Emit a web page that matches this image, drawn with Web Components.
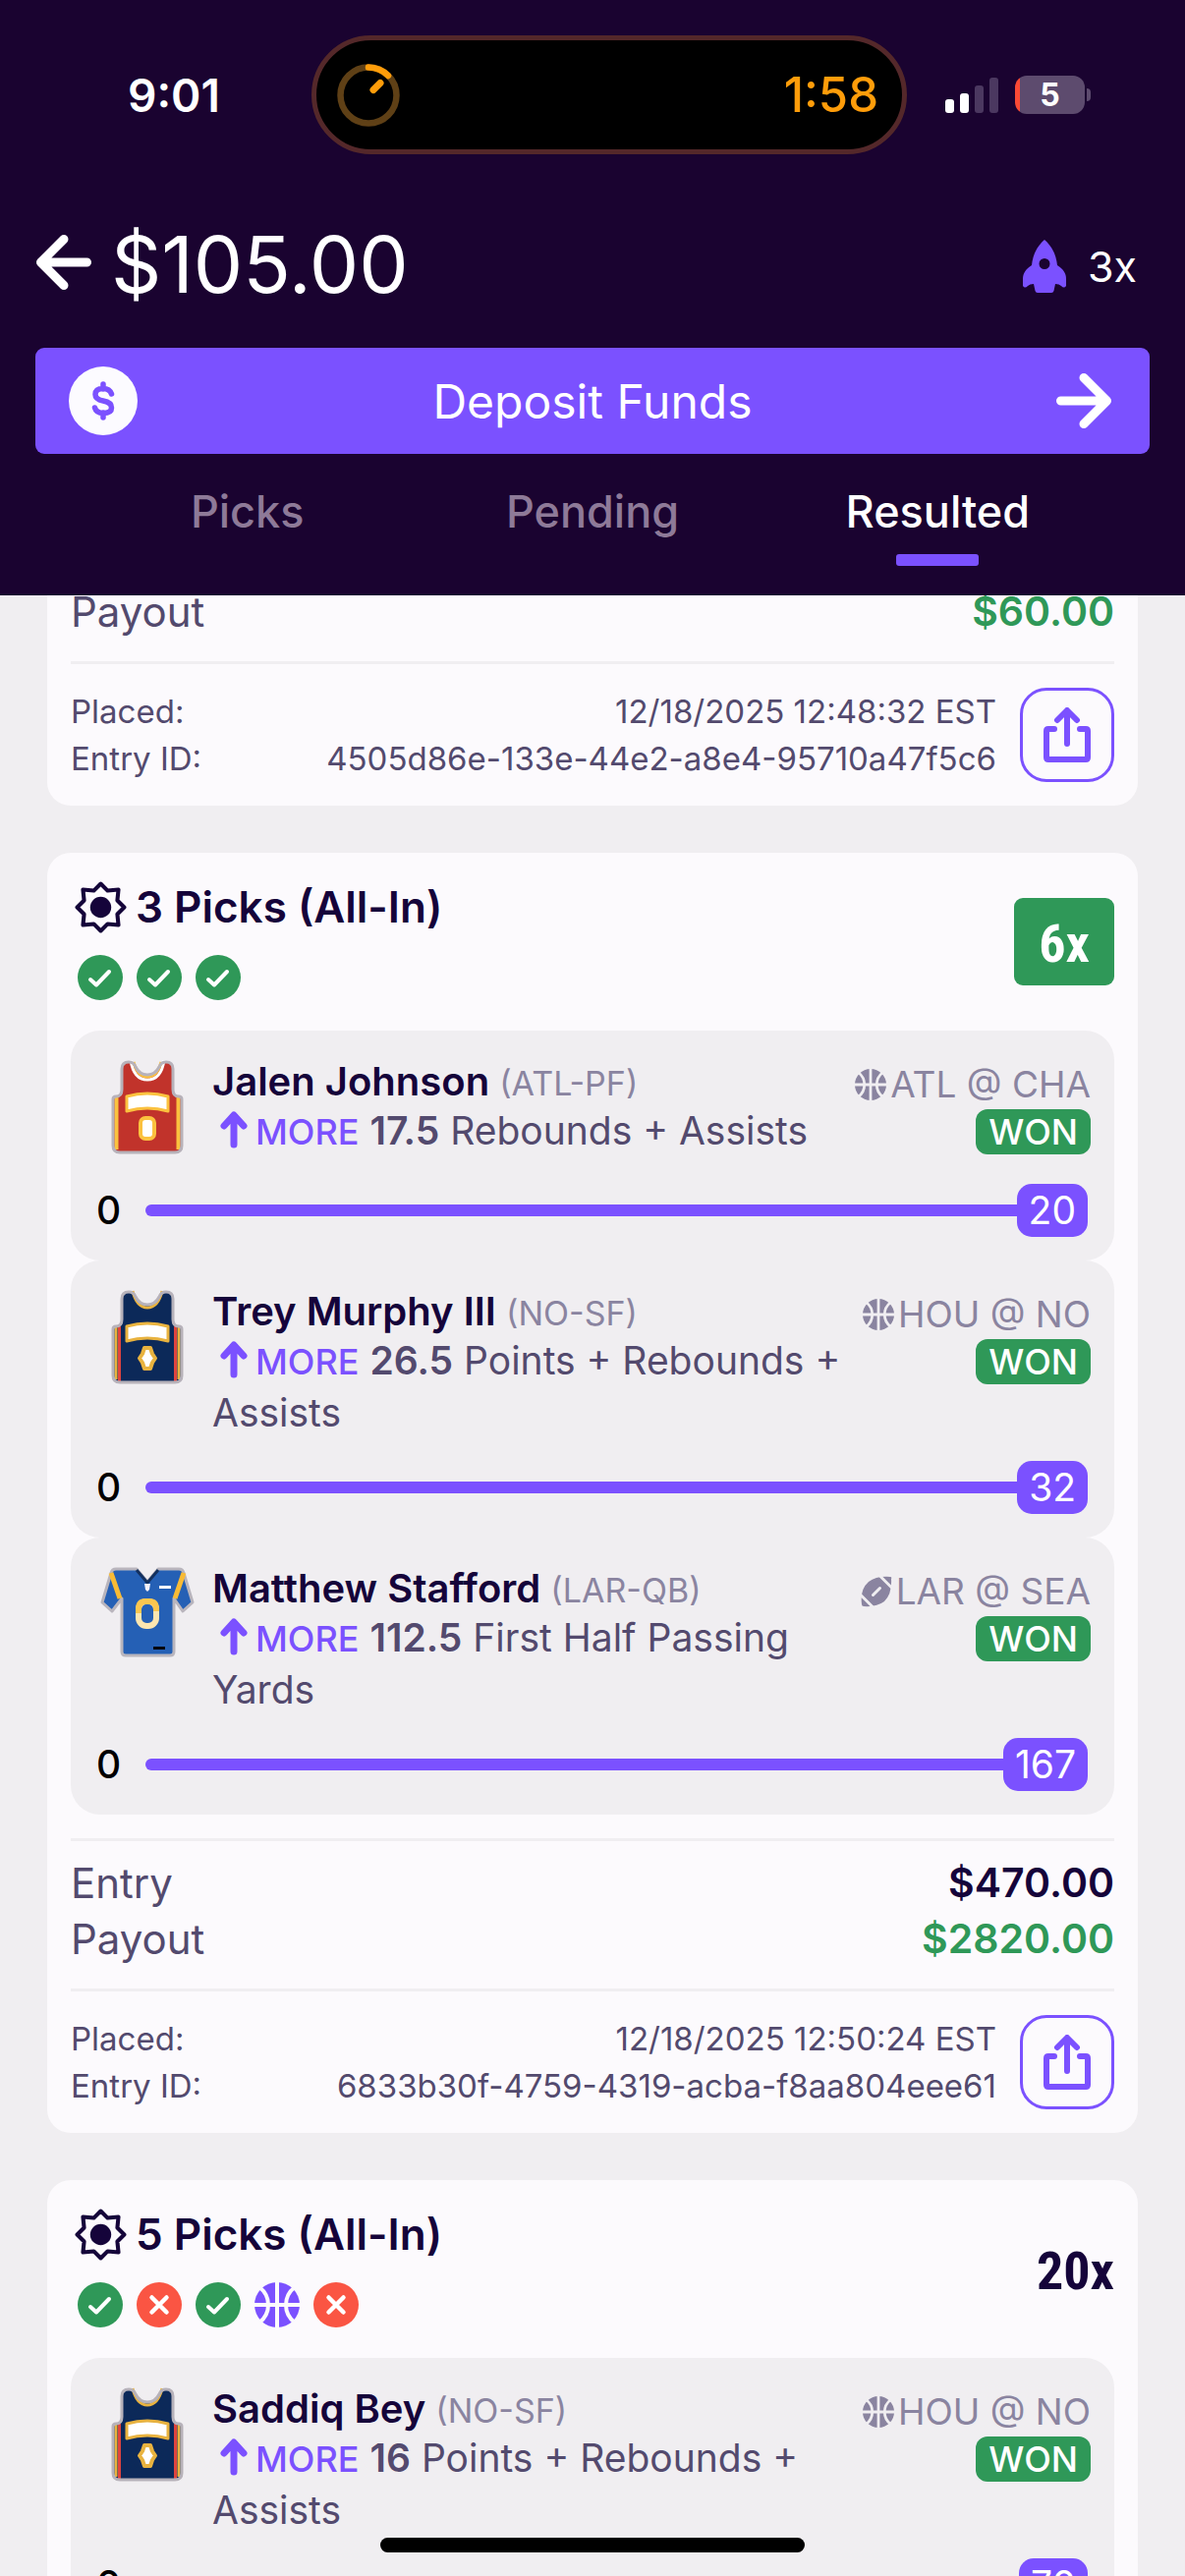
<!DOCTYPE html>
<html lang="en">
<head>
<meta charset="utf-8">
<meta name="viewport" content="width=device-width, initial-scale=1">
<title>Resulted entries</title>
<style>
  :root {
    --night: #1a0330;
    --ink: #15043a;
    --body: #534a6e;
    --muted: #8a84a0;
    --violet: #7b51ff;
    --green: #2f9858;
    --red: #fa5543;
    --card: #fcfafd;
    --page: #f0eef1;
  }
  body { margin: 0; background: var(--page); color: var(--ink); font-family: Inter, "Liberation Sans", sans-serif; }
</style>
</head>
<body>
<entries-app>
  <status-bar slot="top"></status-bar>
  <app-header slot="top" balance="$105.00" boost="3x"></app-header>

  <entry-card partial payout="$60.00" placed="12/18/2025 12:48:32 EST" entry-id="4505d86e-133e-44e2-a8e4-95710a47f5c6"></entry-card>

  <entry-card heading="3 Picks (All-In)" results="win win win" multiplier="6x" won
    entry="$470.00" payout="$2820.00" placed="12/18/2025 12:50:24 EST" entry-id="6833b30f-4759-4319-acba-f8aa804eee61">
    <pick-row jersey="hawks" player="Jalen Johnson" role-tag="(ATL-PF)" line="17.5" stat="Rebounds + Assists" sport="basketball" game="ATL @ CHA" score="20"></pick-row>
    <pick-row jersey="pelicans" player="Trey Murphy III" role-tag="(NO-SF)" line="26.5" stat="Points + Rebounds + Assists" sport="basketball" game="HOU @ NO" score="32"></pick-row>
    <pick-row jersey="rams" player="Matthew Stafford" role-tag="(LAR-QB)" line="112.5" stat="First Half Passing Yards" sport="football" game="LAR @ SEA" score="167"></pick-row>
  </entry-card>

  <entry-card heading="5 Picks (All-In)" results="win loss win basketball loss" multiplier="20x">
    <pick-row jersey="pelicans" player="Saddiq Bey" role-tag="(NO-SF)" line="16" stat="Points + Rebounds + Assists" sport="basketball" game="HOU @ NO" score="70"></pick-row>
  </entry-card>
</entries-app>

<script>
const tank = (base, trim, sides, number) => `<svg viewBox="0 0 96 96">
  <path d="M22 9Q22 2 29 2Q34 2 36 7Q40 15 48 15Q56 15 60 7Q62 2 67 2Q74 2 74 9V30Q74 37 80 37Q83 37 83 40V87Q83 94 76 94H20Q13 94 13 87V40Q13 37 16 37Q22 37 22 30Z" fill="${base}"/>
  ${sides}${trim}
  <path d="M22 9Q22 2 29 2Q34 2 36 7Q40 15 48 15Q56 15 60 7Q62 2 67 2Q74 2 74 9V30Q74 37 80 37Q83 37 83 40V87Q83 94 76 94H20Q13 94 13 87V40Q13 37 16 37Q22 37 22 30Z" fill="none" stroke="#b7b2ba" stroke-width="3"/>
  ${number}</svg>`;

const ICONS = {
  back: `<svg viewBox="0 0 58 58" fill="none" stroke="currentColor" stroke-width="9" stroke-linecap="round" stroke-linejoin="round"><path d="M29 5.5L5.5 29L29 52.5M6 29H52.5"/></svg>`,
  forward: `<svg viewBox="0 0 58 58" fill="none" stroke="currentColor" stroke-width="9" stroke-linecap="round" stroke-linejoin="round"><path d="M29 5.5L52.5 29L29 52.5M52 29H5.5"/></svg>`,
  rocket: `<svg viewBox="0 0 44 54" fill="currentColor"><path fill-rule="evenodd" d="M22 0C29 6 34 15 35 26C41 30 44 34 44 40V47Q42 50 39 47Q37 45 33 45L31.500 52Q31 54 29 54H15Q13 54 12.500 52L11 45Q7 45 5 47Q2 50 0 47V40C0 34 3 30 9 26C10 15 15 6 22 0ZM22 19A5.500 5.500 0 1 0 22 30A5.500 5.500 0 1 0 22 19Z"/></svg>`,
  coin: `<svg viewBox="0 0 70 70"><circle cx="35" cy="35" r="35" fill="#fcfbff"/><path d="M43.500 28Q41.500 22.500 35 22.500Q27 22.500 27 28.500Q27 33.500 35 35Q43.500 36.500 43.500 42Q43.500 47.500 35 47.500Q28 47.500 26.500 42M35 18V23M35 47V52" fill="none" stroke="#7b51ff" stroke-width="5.500" stroke-linecap="round"/></svg>`,
  share: `<svg viewBox="0 0 48 56" fill="none" stroke="currentColor" stroke-width="6" stroke-linecap="round" stroke-linejoin="round"><path d="M24 37V5M14 13L24 3L34 13M11 22H5Q3 22 3 24V51Q3 53 5 53H43Q45 53 45 51V24Q45 22 43 22H37"/></svg>`,
  star: `<svg viewBox="0 0 52 52"><path d="M26 2.500L32.900 9.400L43.700 8.300L42.600 19.100L49.500 26L42.600 32.900L43.700 43.700L32.900 42.600L26 49.500L19.100 42.600L8.300 43.700L9.400 32.900L2.500 26L9.400 19.100L8.300 8.300L19.100 9.400Z" fill="none" stroke="currentColor" stroke-width="4" stroke-linejoin="round"/><circle cx="26" cy="26" r="10.500" fill="currentColor"/></svg>`,
  win: `<svg viewBox="0 0 46 46"><circle cx="23" cy="23" r="23" fill="#2f9858"/><path d="M13 25L19 30.500L32 17" fill="none" stroke="#fff" stroke-width="4" stroke-linecap="round" stroke-linejoin="round"/></svg>`,
  loss: `<svg viewBox="0 0 46 46"><circle cx="23" cy="23" r="23" fill="#fa5543"/><path d="M15.500 15.500L30.500 30.500M30.500 15.500L15.500 30.500" fill="none" stroke="#fff" stroke-width="4.500" stroke-linecap="round"/></svg>`,
  basketball: `<svg viewBox="0 0 46 46"><mask id="m"><rect width="46" height="46" fill="#fff"/><path d="M23 0V46M0 23H46M5 5Q14 12 14 23Q14 34 5 41M41 5Q32 12 32 23Q32 34 41 41" fill="none" stroke="#000" stroke-width="4"/></mask><circle cx="23" cy="23" r="23" fill="currentColor" mask="url(#m)"/></svg>`,
  football: `<svg viewBox="0 0 32 32"><mask id="m"><rect width="32" height="32" fill="#fff"/><path d="M0 19.500L12.500 32M19.500 0L32 12.500" stroke="#000" stroke-width="2.800"/><path d="M12.500 19.500L19.500 12.500" stroke="#000" stroke-width="3" stroke-linecap="round"/></mask><path d="M1 29Q-1 14 8 6Q16 0 30 1Q32 1 31 3Q32 18 24 26Q16 32 3 31Q1 31 1 29Z" fill="currentColor" mask="url(#m)"/></svg>`,
  up: `<svg viewBox="0 0 28 38" fill="none" stroke="currentColor" stroke-width="7" stroke-linecap="round" stroke-linejoin="round"><path d="M14 34V5M4 15L14 4L24 15"/></svg>`,
  hawks: tank('#c1332b',
    `<path d="M31 0Q34 20 48 20Q62 20 65 0" fill="none" stroke="#fff" stroke-width="3"/><path d="M34 2Q38 17 48 17Q58 17 62 2" fill="none" stroke="#fbc23f" stroke-width="3"/>`,
    `<path d="M16.500 38V91M79.500 38V91" stroke="#fbc23f" stroke-width="4"/>`,
    `<path d="M27 37Q48 31 69 37V52Q48 46 27 52Z" fill="#fff" stroke="#fbc23f" stroke-width="3" stroke-linejoin="round"/><rect x="41" y="59" width="14" height="21" rx="5" fill="#fff" stroke="#fbc23f" stroke-width="4"/>`),
  pelicans: tank('#0c2959',
    `<path d="M33 1Q37 18 48 18Q59 18 63 1" fill="none" stroke="#e9b33f" stroke-width="3"/>`,
    `<path d="M16 38V91M80 38V91" stroke="#e9b33f" stroke-width="3"/><path d="M19.500 37V93M76.500 37V93" stroke="#e0443e" stroke-width="3"/>`,
    `<path d="M27 37Q48 31 69 37V52Q48 46 27 52Z" fill="#fff" stroke="#e9b33f" stroke-width="3" stroke-linejoin="round"/><path d="M45 59H51L53 65L56 69.500L53 74L51 80H45L43 74L40 69.500L43 65Z" fill="#fff" stroke="#e9b33f" stroke-width="4" stroke-linejoin="round"/>`),
  rams: `<svg viewBox="0 0 96 96"><path d="M11 6Q12 2 16 2H37L48 15L59 2H80Q84 2 85 6L94 36L84 45L75 32V86Q75 90 71 90H26Q22 90 22 86V32L12 45L2 36Z" fill="#2560b5" stroke="#b9b5bd" stroke-width="3" stroke-linejoin="round"/>
    <path d="M11 6L20 32M85 6L76 32" stroke="#f9bb35" stroke-width="5"/><path d="M37 3L48 16L59 3" fill="none" stroke="#12305f" stroke-width="3"/><path d="M45 17H51L50 23L48 25L46 23Z" fill="#f4f1f8"/><rect x="60" y="19" width="12" height="3" fill="#fff"/>
    <rect x="39" y="35" width="18" height="25" rx="8" fill="none" stroke="#fce6b0" stroke-width="6"/><path d="M39 47V43Q39 35 46 35H50Q57 35 57 43V45" fill="none" stroke="#fbc64f" stroke-width="6"/><rect x="54" y="81" width="12" height="3" fill="#06060c"/></svg>`
};

class Base extends HTMLElement {
  connectedCallback() {
    if (this.shadowRoot) return;
    this.attachShadow({ mode: 'open' }).innerHTML = this.view();
  }
  a(name) { return this.getAttribute(name) || ''; }
}

customElements.define('ui-icon', class extends Base {
  view() {
    return `<style>:host{display:block;flex:none}svg{display:block;width:100%;height:100%}</style>${ICONS[this.a('name')]}`;
  }
});

customElements.define('entries-app', class extends Base {
  view() {
    return `<style>
      :host { display: flex; flex-direction: column; height: 100vh; overflow: hidden; }
      header { background: var(--night); color: #fff; position: relative; z-index: 1; flex: none; }
      main { flex: 1; min-height: 0; padding: 0 48px; margin-top: -36px; display: flex; flex-direction: column; gap: 48px; overflow: hidden; }
      .home { position: fixed; left: 50%; bottom: 24px; width: 432px; height: 15px; margin-left: -216px; border-radius: 8px; background: #000; z-index: 2; }
    </style>
    <header><slot name="top"></slot></header>
    <main><slot></slot></main>
    <div class="home"></div>`;
  }
});

customElements.define('status-bar', class extends Base {
  view() {
    return `<style>
      :host { display: flex; align-items: center; justify-content: center; padding: 36px 96px 0; font-weight: 600; }
      .time { flex: 1; padding-left: 34px; font-size: 46px; line-height: 56px; }
      .island { display: flex; align-items: center; justify-content: space-between; box-sizing: border-box; width: 606px; height: 121px; padding: 0 24px 0 21px; border: 5px solid #54282a; border-radius: 61px; background: #000; color: #ff9d0a; font-size: 49px; font-weight: 500; }
      .island svg { width: 64px; height: 64px; }
      .right { flex: 1; display: flex; align-items: center; justify-content: flex-end; gap: 16px; }
      .signal { width: 55px; height: 36px; }
      .battery { display: flex; align-items: center; gap: 2px; }
      .cell { width: 71px; height: 39px; border-radius: 12px; background: linear-gradient(90deg, #fa4a35 5px, #5d4b6e 5px); font-size: 32px; line-height: 39px; font-weight: 700; text-align: center; }
      .nub { width: 4px; height: 13px; border-radius: 0 4px 4px 0; background: #5d4b6e; }
    </style>
    <div class="time">9:01</div>
    <div class="island">
      <svg viewBox="0 0 64 64" fill="none" stroke-width="6.500"><circle cx="32" cy="32" r="28.500" stroke="#5f4016"/><path d="M32 3.500A28.500 28.500 0 0 1 52 12" stroke="#ff9d0a" stroke-linecap="round"/><path d="M37 26.500L44 19.500" stroke="#ff9d0a" stroke-width="7" stroke-linecap="round"/></svg>
      <span>1:58</span>
    </div>
    <div class="right">
      <svg class="signal" viewBox="0 0 55 36"><rect y="22" width="9" height="14" rx="3" fill="#fff"/><rect x="15" y="16" width="9" height="20" rx="3" fill="#fff"/><rect x="30" y="8" width="9" height="28" rx="3" fill="#4b3860"/><rect x="45" width="9" height="36" rx="3" fill="#4b3860"/></svg>
      <div class="battery"><div class="cell">5</div><div class="nub"></div></div>
    </div>`;
  }
});

customElements.define('app-header', class extends Base {
  view() {
    return `<style>
      :host { display: block; padding: 62px 36px 0; }
      button { font: inherit; color: inherit; background: none; border: 0; padding: 0; margin: 0; }
      .top { display: flex; align-items: center; height: 96px; }
      .back ui-icon { width: 58px; height: 58px; }
      .balance { flex: 1; padding: 4px 0 0 19px; font-size: 80px; line-height: 92px; }
      .boost { display: flex; align-items: center; gap: 22px; padding: 8px 13px 0 0; font-size: 43px; line-height: 54px; }
      .boost ui-icon { width: 44px; height: 54px; color: var(--violet); }
      .deposit { display: flex; align-items: center; width: 100%; height: 108px; margin-top: 39px; padding: 0 38px 0 34px; border-radius: 9px; background: var(--violet); font-size: 48px; }
      .deposit ui-icon { width: 58px; height: 58px; margin-left: 8px; }
      .deposit .coin { width: 70px; height: 70px; margin: 0; }
      .deposit span { flex: 1; }
      nav { display: flex; padding: 30px 40px 30px; }
      nav button { flex: 1; display: flex; flex-direction: column; align-items: center; gap: 14px; font-size: 45px; line-height: 58px; font-weight: 500; color: #8e7a98; }
      nav button::after { content: ""; width: 84px; height: 12px; border-radius: 3px; }
      nav button[aria-selected=true] { color: #fff; }
      nav button[aria-selected=true]::after { background: var(--violet); }
    </style>
    <div class="top">
      <button class="back" aria-label="Back"><ui-icon name="back"></ui-icon></button>
      <div class="balance">${this.a('balance')}</div>
      <div class="boost"><ui-icon name="rocket"></ui-icon><span>${this.a('boost')}</span></div>
    </div>
    <button class="deposit"><ui-icon class="coin" name="coin"></ui-icon><span>Deposit Funds</span><ui-icon name="forward"></ui-icon></button>
    <nav role="tablist">
      <button role="tab" aria-selected="false">Picks</button>
      <button role="tab" aria-selected="false">Pending</button>
      <button role="tab" aria-selected="true">Resulted</button>
    </nav>`;
  }
});

customElements.define('entry-card', class extends Base {
  view() {
    const head = this.hasAttribute('partial') ? '' : `<div class="head">
      <div class="titles">
        <h2><ui-icon name="star"></ui-icon>${this.a('heading')}</h2>
        <div class="results">${this.a('results').split(' ').map(r => `<ui-icon name="${r}"></ui-icon>`).join('')}</div>
      </div>
      <div class="multi ${this.hasAttribute('won') ? 'won' : ''}">${this.a('multiplier')}</div>
    </div>
    <slot></slot>`;
    const entry = this.a('entry') ? `<div class="sum"><span>Entry</span><b>${this.a('entry')}</b></div>` : '';
    const foot = this.a('payout') ? `<div class="totals">${entry}<div class="sum"><span>Payout</span><b class="paid">${this.a('payout')}</b></div></div>
    <div class="meta">
      <dl><div><dt>Placed:</dt><dd>${this.a('placed')}</dd></div><div><dt>Entry ID:</dt><dd>${this.a('entry-id')}</dd></div></dl>
      <button aria-label="Share entry"><ui-icon name="share"></ui-icon></button>
    </div>` : '';
    return `<style>
      :host { display: block; flex: none; padding: 24px; border-radius: 24px; background: var(--card); }
      .head { display: flex; align-items: center; justify-content: space-between; padding-bottom: 24px; }
      h2 { display: flex; align-items: center; gap: 9px; margin: 0; padding-left: 4px; font-size: 44px; line-height: 62px; font-weight: 600; }
      h2 ui-icon { width: 53px; height: 53px; }
      .results { display: flex; gap: 14px; padding: 18px 7px 7px; color: var(--violet); }
      .results ui-icon { width: 46px; height: 46px; }
      .multi { padding-top: 4px; font-family: "Liberation Sans Narrow", "Roboto Condensed", Roboto, sans-serif; font-size: 54px; line-height: 85px; font-weight: 700; }
      .won { padding: 4px 25px 0; border-radius: 9px; background: var(--green); color: #fff; }
      .totals { padding: 14px 0 22px; }
      :host(:not([partial])) .totals { margin-top: 24px; border-top: 3px solid var(--page); }
      :host([partial]) .totals { padding-top: 0; }
      .sum { display: flex; justify-content: space-between; font-size: 42px; line-height: 57px; color: var(--body); }
      .sum b { font-size: 41px; font-weight: 600; color: var(--ink); }
      .sum .paid { color: var(--green); }
      .meta { display: flex; align-items: center; gap: 24px; padding-top: 24px; border-top: 3px solid var(--page); }
      dl { flex: 1; margin: 0; font-size: 33px; line-height: 48px; color: var(--body); }
      dl div { display: flex; justify-content: space-between; }
      dd { margin: 0; }
      button { display: flex; align-items: center; justify-content: center; box-sizing: border-box; width: 96px; height: 96px; padding: 0; border: 3px solid var(--violet); border-radius: 27px; background: none; color: var(--violet); }
      button ui-icon { width: 48px; height: 56px; }
    </style>${head}${foot}`;
  }
});

customElements.define('pick-row', class extends Base {
  view() {
    return `<style>
      :host { display: block; padding: 28px 24px 24px 30px; border-radius: 30px; background: var(--page); }
      .info { display: flex; min-height: 105px; }
      .jersey { width: 96px; height: 96px; padding-top: 2px; margin-right: 18px; }
      .pick { flex: 1; min-width: 0; }
      h3 { margin: 0; font-size: 40px; line-height: 47px; font-weight: 600; }
      h3 small { font-size: 34px; line-height: 1; font-weight: 400; color: var(--muted); }
      p { margin: 0; font-size: 39px; line-height: 53px; color: var(--body); }
      p ui-icon { display: inline-block; width: 28px; height: 38px; margin: 0 8px; vertical-align: -4px; color: var(--violet); }
      em { font-style: normal; font-weight: 500; font-size: 36px; line-height: 1; color: var(--violet); }
      b { font-weight: 600; line-height: 1; }
      .side { display: flex; flex-direction: column; align-items: flex-end; gap: 3px; }
      .game { display: flex; align-items: center; gap: 4px; padding-top: 5px; font-size: 37px; line-height: 44px; color: var(--muted); }
      .game ui-icon { width: 32px; height: 32px; }
      .won { padding: 0 13px; border-radius: 12px; background: var(--green); color: #fff; font-size: 36px; line-height: 46px; font-weight: 500; }
      .track { display: flex; align-items: center; margin: 23px 3px 0 -4px; font-size: 39px; line-height: 54px; }
      .zero { width: 50px; color: #000; font-weight: 500; }
      .bar { flex: 1; height: 12px; border-radius: 6px 0 0 6px; background: var(--violet); }
      .score { padding: 0 12px; border-radius: 15px; background: var(--violet); color: #fff; }
    </style>
    <div class="info">
      <ui-icon class="jersey" name="${this.a('jersey')}"></ui-icon>
      <div class="pick">
        <h3>${this.a('player')} <small>${this.a('role-tag')}</small></h3>
        <p><ui-icon name="up"></ui-icon><em>MORE</em> <b>${this.a('line')}</b> ${this.a('stat')}</p>
      </div>
      <div class="side">
        <div class="game"><ui-icon name="${this.a('sport')}"></ui-icon><span>${this.a('game')}</span></div>
        <div class="won">WON</div>
      </div>
    </div>
    <div class="track"><span class="zero">0</span><div class="bar"></div><span class="score">${this.a('score')}</span></div>`;
  }
});
</script>
</body>
</html>
